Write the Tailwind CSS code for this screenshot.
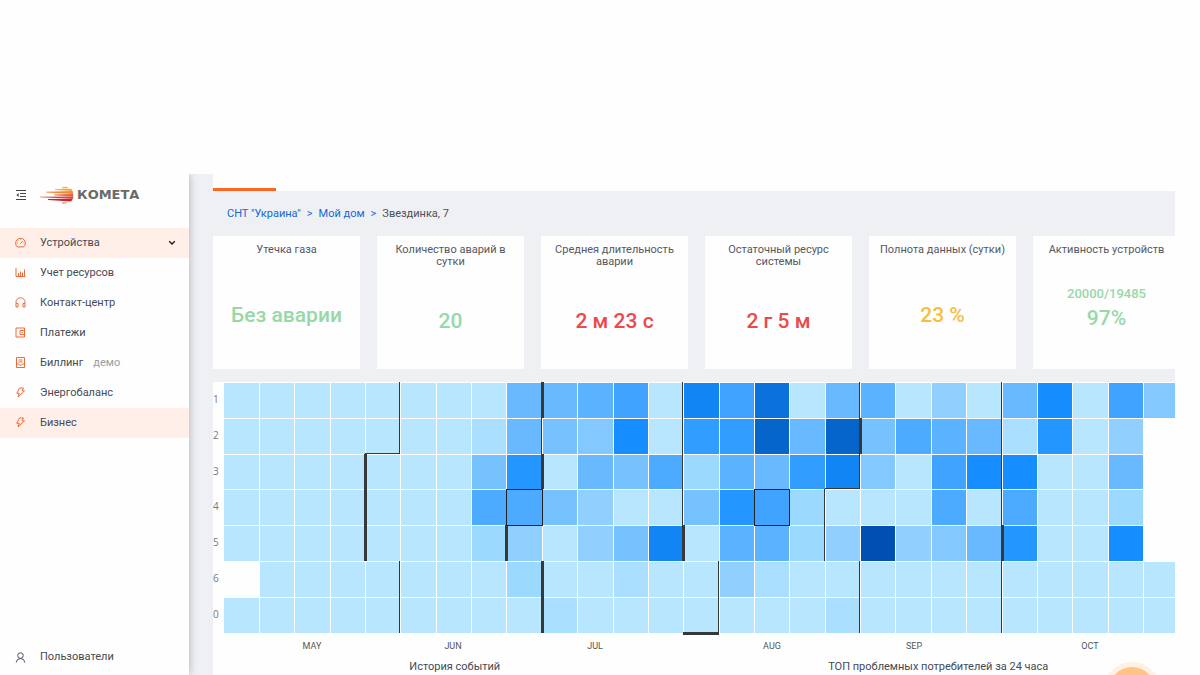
<!DOCTYPE html>
<html lang="ru">
<head>
<meta charset="utf-8">
<meta name="viewport" content="width=device-width, initial-scale=1">
<title>Комета</title>
<script src="https://cdn.jsdelivr.net/npm/@tailwindcss/browser@4"></script>
</head>
<body class="flex h-screen flex-col overflow-hidden bg-[#fefefe] pt-[174px] font-[Roboto,sans-serif] text-[11px] leading-[16px] text-[#454a54]">
<div class="flex min-h-0 flex-1">
  <aside class="z-10 flex w-[189px] shrink-0 flex-col bg-[#fefefe] pb-[3px] shadow-[0_0_8px_rgba(0,0,0,0.28)] [clip-path:inset(0_-12px_0_0)]">
    <div class="flex h-[54px] shrink-0 items-center pb-[13px] pl-4">
      <button type="button" aria-label="Свернуть меню" class="size-[10px]">
        <svg viewBox="0 0 10 10" class="size-[10px]" fill="none" stroke="#444" stroke-width="1"><path d="M0 .5H10M4 3.5H10M4 6.5H10M0 9.5H10"/><path d="M2.6 3L.4 5L2.6 7Z" fill="#444" stroke="none"/></svg>
      </button>
      <a href="#" class="ml-[14px] flex items-center gap-[3px] font-['DejaVu_Sans',sans-serif] text-[13px] leading-none font-bold text-[#6a6a6a]">
        <svg viewBox="0 0 34 18" class="h-[18px] w-[34px]" aria-hidden="true">
          <path d="M22 1.3Q25 0 28 1.3V2.3H22Z" fill="#f5b02e"/>
          <path d="M15 3.2L31 2.8Q32 3.8 32.5 5L15 4Z" fill="#f6a52c"/>
          <path d="M6 5.8L32.6 5Q33 6.4 33.2 7.9L6 6.4Z" fill="#f08a35"/>
          <path d="M14 8.4L33.2 7.9V10.4L14 9.2Z" fill="#e9603a"/>
          <path d="M0 10.7L33.2 10.4V12.7L0 11.3Z" fill="#e03c34"/>
          <path d="M8 13.1L32.8 12.7Q32 14.3 31 15.4L8 13.9Z" fill="#d0222c"/>
          <path d="M22 16.6H28Q25 18 22 17.4Z" fill="#e8643a"/>
        </svg>
        <span>КОМЕТА</span>
      </a>
    </div>
    <nav class="flex flex-1 flex-col">
      <a href="#" class="flex h-[30px] items-center bg-[#ffefe8] pb-px pl-[15px]">
        <svg viewBox="0 0 11 11" class="mr-[14px] size-[11px]" fill="none" stroke="#ee6b3b" stroke-width="1"><path d="M2.3 9.9A4.9 4.9 0 1 1 8.7 9.9ZM5.2 6.8L7.6 4.2M5.5 1.6V2.6M1.6 6H2.6M8.6 6H9.6M2.8 3.2L3.4 3.8"/></svg>
        <span class="flex-1">Устройства</span>
        <svg viewBox="0 0 8 6" class="mr-[13px] h-[6px] w-[8px]" fill="none" stroke="#222" stroke-width="1.5"><path d="M1.2 1.2L4 4L6.8 1.2"/></svg>
      </a>
      <a href="#" class="flex h-[30px] items-center pb-px pl-[15px]">
        <svg viewBox="0 0 11 11" class="mr-[14px] size-[11px]" fill="none" stroke="#ee6b3b" stroke-width="1"><path d="M1 1V9.5H10.5M3.5 9.5V6M5.5 9.5V4.5M7.5 9.5V5.5M9.5 9.5V2.5"/></svg>
        <span>Учет ресурсов</span>
      </a>
      <a href="#" class="flex h-[30px] items-center pb-px pl-[15px]">
        <svg viewBox="0 0 11 11" class="mr-[14px] size-[11px]" fill="none" stroke="#ee6b3b" stroke-width="1"><path d="M1 6.5V5A4.5 4.2 0 0 1 10 5V6.5M1 6.5H3V10H1ZM8 6.5H10V10H8Z"/></svg>
        <span>Контакт-центр</span>
      </a>
      <a href="#" class="flex h-[30px] items-center pb-px pl-[15px]">
        <svg viewBox="0 0 11 11" class="mr-[14px] size-[11px]" fill="none" stroke="#ee6b3b" stroke-width="1"><path d="M9.5 3.5V1H1V10H9.5V7.5M10 3.5H5V7.5H10M9.5 3.5V7.5M6.5 5.5H8"/></svg>
        <span>Платежи</span>
      </a>
      <a href="#" class="flex h-[30px] items-center pb-px pl-[15px]">
        <svg viewBox="0 0 11 11" class="mr-[14px] size-[11px]" fill="none" stroke="#ee6b3b" stroke-width="1"><path d="M1.5 .5H9.5V10.5H1.5ZM3.5 3H7.5M3.5 5H7.5M1.5 7H3.5L4.5 8.2H6.5L7.5 7H9.5"/></svg>
        <span>Биллинг</span><span class="ml-[10px] text-[#9a9ca2]">демо</span>
      </a>
      <a href="#" class="flex h-[30px] items-center pb-px pl-[15px]">
        <svg viewBox="0 0 11 11" class="mr-[14px] size-[11px]" fill="none" stroke="#ee6b3b" stroke-width="1" stroke-linejoin="round"><path d="M4.5 1H8.5L7 3.8H9.5L3 10L4.3 6.3H1.8Z"/></svg>
        <span>Энергобаланс</span>
      </a>
      <a href="#" class="flex h-[30px] items-center bg-[#ffefe8] pb-px pl-[15px]">
        <svg viewBox="0 0 11 11" class="mr-[14px] size-[11px]" fill="none" stroke="#ee6b3b" stroke-width="1" stroke-linejoin="round"><path d="M4.5 1H8.5L7 3.8H9.5L3 10L4.3 6.3H1.8Z"/></svg>
        <span>Бизнес</span>
      </a>
      <a href="#" class="mt-auto flex h-[30px] items-center pl-[15px]">
        <svg viewBox="0 0 11 11" class="mr-[14px] size-[11px]" fill="none" stroke="#4b4f63" stroke-width="1"><circle cx="5.5" cy="3.6" r="2.8"/><path d="M1.2 10.5Q1.5 6.6 5.5 6.5Q9.5 6.6 9.8 10.5"/></svg>
        <span>Пользователи</span>
      </a>
    </nav>
  </aside>

  <main class="flex min-w-0 flex-1 overflow-hidden">
    <div class="w-6 shrink-0 bg-[#eff0f4]"></div>
    <div class="flex min-w-0 flex-1 flex-col">
      <div class="h-[17px] shrink-0 pt-[14px]"><div class="h-[3px] w-[63px] bg-[#fd6721]"></div></div>
      <div class="mr-[25px] flex-1 overflow-hidden bg-[#eff0f4]">
        <nav aria-label="Путь" class="flex h-[45px] items-center gap-[6px] pl-[14px] text-[#1767d2]">
          <a href="#">СНТ "Украина"</a><span>&gt;</span><a href="#">Мой дом</a><span>&gt;</span><span class="text-[#4c4f55]">Звездинка, 7</span>
        </nav>
        <section class="mr-[-5px] grid grid-cols-6 gap-[17px] text-center text-[11px] leading-[12px] text-[#55585e]">
          <article class="flex h-[133px] flex-col bg-[#fefefe] px-[10px] pt-2">
            <h2>Утечка газа</h2>
            <p class="flex flex-1 items-center justify-center pt-[5px] text-[21px] font-medium whitespace-nowrap text-[#97d8a8]">Без аварии</p>
          </article>
          <article class="flex h-[133px] flex-col bg-[#fefefe] px-[10px] pt-2">
            <h2>Количество аварий в сутки</h2>
            <p class="flex flex-1 items-center justify-center pt-[5px] text-[21px] font-medium text-[#97d8a8]">20</p>
          </article>
          <article class="flex h-[133px] flex-col bg-[#fefefe] px-[10px] pt-2">
            <h2>Среднея длительность аварии</h2>
            <p class="flex flex-1 items-center justify-center pt-[5px] text-[21px] font-medium text-[#ea4a4a]">2 м 23 с</p>
          </article>
          <article class="flex h-[133px] flex-col bg-[#fefefe] px-[10px] pt-2">
            <h2>Остаточный ресурс системы</h2>
            <p class="flex flex-1 items-center justify-center pt-[5px] text-[21px] font-medium text-[#ea4a4a]">2 г 5 м</p>
          </article>
          <article class="flex h-[133px] flex-col bg-[#fefefe] px-[10px] pt-2">
            <h2>Полнота данных (сутки)</h2>
            <p class="flex flex-1 items-center justify-center pt-[5px] text-[21px] font-medium text-[#f3c044]">23 %</p>
          </article>
          <article class="flex h-[133px] flex-col bg-[#fefefe] px-[10px] pt-2">
            <h2>Активность устройств</h2>
            <div class="flex flex-1 flex-col items-center justify-center pb-[13px] font-medium text-[#97d8a8]">
              <p class="text-[13px] leading-[24px]">20000/19485</p>
              <p class="text-[21px] leading-[24px]">97%</p>
            </div>
          </article>
        </section>
        <section class="mt-[13px] h-full bg-[#fefefe]">
          <svg id="heatmap" viewBox="0 0 962 274" class="block w-full" font-family="Open Sans, sans-serif" font-size="10" fill="#777"></svg>
          <div class="mr-[-5px] grid grid-cols-2 text-center text-[11px] leading-[21px]">
            <h2>История событий</h2>
            <h2>ТОП проблемных потребителей за 24 часа</h2>
          </div>
        </section>
      </div>
    </div>
  </main>
</div>
<button type="button" aria-label="Помощь" class="fixed right-[40px] bottom-[-43px] size-[56px] rounded-full border-[5px] border-[#fff0e4] bg-[#ffc384]"></button>

<script>
  // One letter per week and day; "." is a day without data.
  const palette = {
    L: '#b9e6ff', a: '#abdfff', b: '#9cd9ff', c: '#91cfff', d: '#83c8ff', e: '#75c2ff',
    f: '#68b9ff', g: '#5bb2ff', h: '#4dabff', i: '#3fa3ff', j: '#319eff', k: '#2496ff',
    l: '#168eff', m: '#1285f4', n: '#0b72dd', o: '#0565cb', p: '#004fb3'
  };
  const days = [
    ['1', 'LLLLLLLLffgiLminLfgLcLflLid'],
    ['2', 'LLLLLLLafedlLjjofoehgfakLc.'],
    ['3', 'LLLLLLLekLfehbgfjmdLillLLf.'],
    ['4', 'LLLLLLLhhecLLekibLLLhLhLLb.'],
    ['5', 'LLLLLLLbcLcemLggbcpcdfkLLl.'],
    ['6', '.LLLLLLLbLLaLLcaLLLLLLLLLLL'],
    ['0', 'LLLLLLLLLaLLLLLLLaLLLLLLLLL']
  ];
  const X = c => c ? Math.round(10.6 + c * 35.36) : 10;
  const Y = r => Math.round(r * 35.8);
  let out = '';
  days.forEach(([name, row], r) => {
    out += `<text x="0" y="${Y(r) + 21}">${name}</text>`;
    [...row].forEach((k, c) => {
      if (k !== '.') out += `<rect x="${X(c) + 1}" y="${Y(r) + 1}" width="${X(c + 1) - X(c) - 1}" height="${Y(r + 1) - Y(r) - 1}" fill="${palette[k]}"/>`;
    });
  });
  // Month borders: column, first row, last row (exclusive), thickness.
  [[5,0,2,1],[4,2,5,3],[5,5,7,1],[9,0,1,3],[9,1,2,1],[9,2,3,3],[8,4,5,3],[9,5,7,3],
   [13,0,4,1],[13,4,5,3],[14,5,7,1],[18,0,1,1],[18,1,2,3],[18,2,3,1],[17,3,5,1],[18,5,7,1],
   [22,0,4,1],[22,4,5,3],[22,5,7,1]].forEach(([c, a, b, w]) => {
    out += `<rect x="${X(c) - 1}" y="${Y(a)}" width="${w}" height="${Y(b) - Y(a)}" fill="#383838"/>`;
  });
  [[4,2,1],[17,3,1],[13,7,3]].forEach(([c, r, w]) => {
    out += `<rect x="${X(c)}" y="${Y(r) - 1}" width="${X(c + 1) - X(c)}" height="${w}" fill="#383838"/>`;
  });
  [8, 15].forEach(c => {
    out += `<rect x="${X(c) + .5}" y="${Y(3) + .5}" width="${X(c + 1) - X(c)}" height="${Y(4) - Y(3)}" fill="none" stroke="#222"/>`;
  });
  [['MAY',99],['JUN',240],['JUL',382],['AUG',559],['SEP',701],['OCT',877]].forEach(([m, x]) => {
    out += `<text x="${x}" y="267" text-anchor="middle" fill="#555" font-family="Roboto" font-size="9">${m}</text>`;
  });
  document.getElementById('heatmap').innerHTML = out;
</script>
</body>
</html>
